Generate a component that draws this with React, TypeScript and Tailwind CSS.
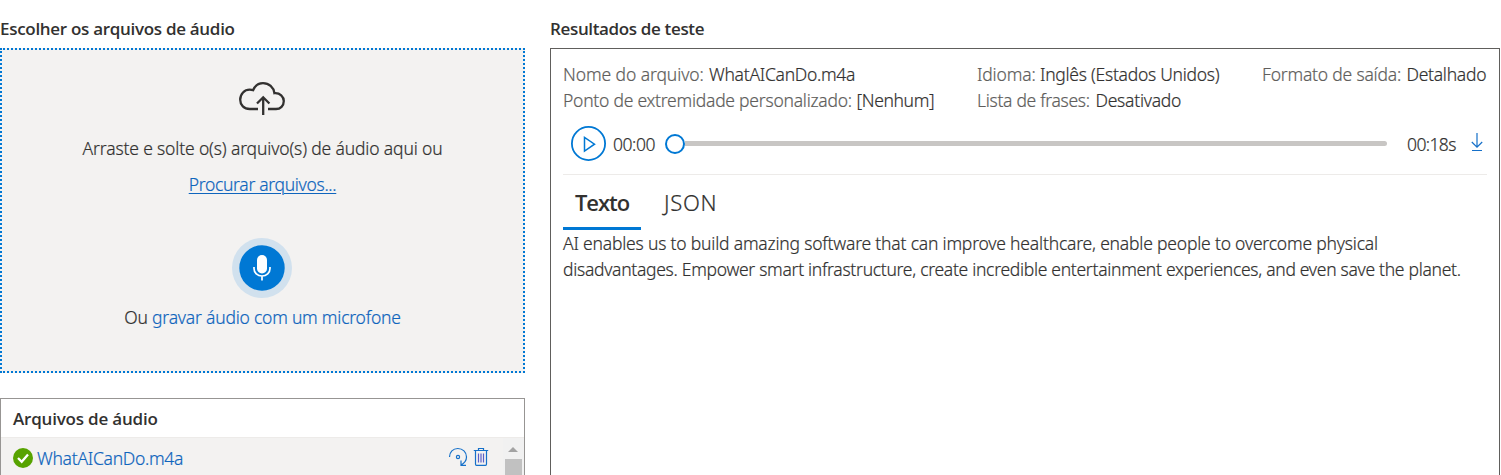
import type { ReactNode } from "react";

function Field({ label, labelClass, value, valueClass }: { label: string; labelClass: string; value: string; valueClass: string }) {
  return (
    <div className="flex h-[26px] whitespace-nowrap">
      <span className={`shrink-0 text-[#605e5c] ${labelClass}`}>{label}</span>
      <span className={valueClass}>{value}</span>
    </div>
  );
}

function Title({ children, className }: { children: ReactNode; className: string }) {
  return (
    <h2 className={`h-[26px] whitespace-nowrap font-['Open_Sans',sans-serif] text-[17px] leading-[27px] font-semibold [-webkit-text-stroke:0] ${className}`}>
      {children}
    </h2>
  );
}

function CloudUpload() {
  return (
    <svg className="mr-auto ml-[236px] h-[36px] w-[48px]" viewBox="0 0 48 36" fill="none" stroke="#323130" strokeWidth="2.3">
      <path d="M20 30H11.8C6 30 2.2 26 2.2 20.800C2.2 14.800 6.6 10.600 11.600 10.600C13 10.600 14.200 10.700 15.200 11.100C17 6.800 20.700 4.200 25 4.200C31 4.200 35.600 8.300 36.400 14.200C42 13.700 45.800 17.600 45.800 22.100C45.800 26.800 42.400 30 38 30H30" />
      <path d="M25.200 36V19M19 24.500L25.200 18.300L31.400 24.500" />
    </svg>
  );
}

function MicButton() {
  return (
    <svg className="mr-auto ml-[230px] h-[60px] w-[60px]" viewBox="0 0 60 60" fill="none">
      <circle cx="30" cy="30" r="30" fill="#d1e1ee" />
      <circle cx="30" cy="30" r="22.7" fill="#0078d4" />
      <rect x="25" y="17" width="10" height="18.5" rx="5" fill="#fff" />
      <path d="M22 29V30.5C22 35 25.5 38 30 38C34.500 38 38 35 38 30.500V29M30 38V42.500" stroke="#fff" strokeWidth="1.7" />
    </svg>
  );
}

function UploadPanel() {
  return (
    <section className="h-[325px] border-2 border-dotted border-[#0078d4] bg-[#f3f2f1] pt-[29px] text-center">
      <CloudUpload />
      <p className="mt-[20px] h-[26px] tracking-[-0.15px]">Arraste e solte o(s) arquivo(s) de áudio aqui ou</p>
      <p className="mt-[10px] h-[26px] tracking-[-0.31px]">
        <a className="text-[#0f65bd] underline decoration-1 underline-offset-2">Procurar arquivos...</a>
      </p>
      <div className="mt-[41px]">
        <MicButton />
      </div>
      <p className="mt-[6px] h-[26px] tracking-[-0.22px]">
        Ou <a className="text-[#0f65bd]">gravar áudio com um microfone</a>
      </p>
    </section>
  );
}

function FilesPanel() {
  return (
    <section className="mt-[25px] h-[77px] border border-b-0 border-[#979593]">
      <div className="h-[39px] border-b border-[#edebe9] pt-[6px] pl-3">
        <Title className="tracking-[-0.2px]">Arquivos de áudio</Title>
      </div>
      <div className="flex h-[37px] bg-[#f3f2f1]">
        <div className="flex grow items-start pl-3">
          <svg className="mt-[10px] h-5 w-5" viewBox="0 0 20 20" fill="none">
            <circle cx="10" cy="10" r="10" fill="#57a300" />
            <path d="M5 10L8.700 13.700L15 6.500" stroke="#fff" strokeWidth="2.300" />
          </svg>
          <a className="mt-[7px] ml-1 tracking-[-0.28px] text-[#0f65bd]">WhatAICanDo.m4a</a>
          <svg className="mt-[8px] ml-auto h-5 w-5" viewBox="0 0 20 20" fill="none" stroke="#1570c9" strokeWidth="1.2">
            <path d="M1.500 11C1.500 6 5 2.500 9.800 2.500C14.700 2.500 18.500 6 18.500 11C18.500 14.300 16.200 17.200 13 19M13 14.500V19.400H18" />
            <circle cx="10" cy="11" r="1.600" />
          </svg>
          <svg className="mt-[8px] mr-[14px] ml-[5px] h-5 w-4" viewBox="0 0 16 20" fill="none" stroke="#1570c9" strokeWidth="1.2">
            <path d="M0.800 4.500H15.200M5.500 4.500V2.500H10.500V4.500M2.500 4.500V18Q2.500 19.300 3.500 19.300H12.500Q13.500 19.300 13.500 18V4.500" />
            <path d="M5.500 7.500V16.500M8 7.500V16.500M10.500 7.500V16.500" stroke="#5a5fc8" />
          </svg>
        </div>
        <div className="flex w-[21px] flex-col items-center bg-[#f1f1f1] pt-[9px] pr-px">
          <div className="h-0 w-0 border-x-[5px] border-b-[5px] border-x-transparent border-b-[#a3a3a3]" />
          <div className="mt-[7px] w-[17px] grow bg-[#c1c1c1]" />
        </div>
      </div>
    </section>
  );
}

function Player() {
  return (
    <div className="flex h-[62px] items-center border-b border-[#edebe9] pl-2">
      <svg className="h-9 w-9 shrink-0" viewBox="0 0 36 36" fill="none" stroke="#0078d4">
        <circle cx="17.500" cy="17.500" r="16.600" strokeWidth="1.800" />
        <path d="M13.500 11.500V25L23.500 18.200Z" strokeWidth="1.500" />
      </svg>
      <span className="ml-[6px] w-[52px] tracking-[-0.45px]">00:00</span>
      <div className="flex h-5 w-[722px] shrink-0 items-center">
        <div className="h-5 w-5 shrink-0 rounded-full border-2 border-[#0078d4] bg-white" />
        <div className="h-[5px] grow rounded-r-full bg-[#c8c6c4]" />
      </div>
      <span className="ml-[20px] w-[64px] tracking-[-0.6px]">00:18s</span>
      <svg className="-mt-[4px] h-5 w-3 shrink-0" viewBox="0 0 12 20" fill="none" stroke="#1570c9" strokeWidth="1.200">
        <path d="M6 1V15M0.800 10L6 15.200L11.200 10M1 18.500H11" />
      </svg>
    </div>
  );
}

function ResultsPanel() {
  return (
    <section className="h-[427px] border border-b-0 border-[#605e5c] px-3 pt-3">
      <div className="flex h-[52px]">
        <div className="w-[414px] shrink-0">
          <Field label="Nome do arquivo:" labelClass="w-[146px] tracking-[-0.08px]" value="WhatAICanDo.m4a" valueClass="tracking-[-0.28px]" />
          <Field label="Ponto de extremidade personalizado:" labelClass="w-[293.500px] tracking-[-0.24px]" value="[Nenhum]" valueClass="tracking-[-0.36px]" />
        </div>
        <div className="w-[285px] shrink-0">
          <Field label="Idioma:" labelClass="w-[63px] tracking-[-0.15px]" value="Inglês (Estados Unidos)" valueClass="tracking-[-0.27px]" />
          <Field label="Lista de frases:" labelClass="w-[118.500px] tracking-[-0.3px]" value="Desativado" valueClass="tracking-[-0.25px]" />
        </div>
        <Field label="Formato de saída:" labelClass="w-[144.500px] tracking-[-0.2px]" value="Detalhado" valueClass="tracking-[-0.27px]" />
      </div>
      <Player />
      <div className="flex h-[55px] text-[22px] leading-[54px]">
        <div className="w-[78px] border-b-[3px] border-[#0078d4] text-center font-['Open_Sans',sans-serif] font-semibold tracking-[-1.050px] [-webkit-text-stroke:0]">Texto</div>
        <div className="ml-[23px] tracking-[0.7px]">JSON</div>
      </div>
      <p className="whitespace-nowrap">
        <span className="block tracking-[-0.195px]">AI enables us to build amazing software that can improve healthcare, enable people to overcome physical</span>
        <span className="block tracking-[-0.292px]">disadvantages. Empower smart infrastructure, create incredible entertainment experiences, and even save the planet.</span>
      </p>
    </section>
  );
}

export default function App() {
  return (
    <main className="flex h-[475px] w-[1500px] gap-[25px] overflow-hidden bg-white pt-[15px] font-['Noto_Sans',sans-serif] text-[17.5px] leading-[26px] font-light text-[#323130] [-webkit-text-stroke:0.2px]">
      <div className="w-[525px] shrink-0">
        <Title className="mb-[7px] tracking-[-0.3px]">Escolher os arquivos de áudio</Title>
        <UploadPanel />
        <FilesPanel />
      </div>
      <div className="w-[950px] shrink-0">
        <Title className="mb-[7px] tracking-[-0.35px]">Resultados de teste</Title>
        <ResultsPanel />
      </div>
    </main>
  );
}
